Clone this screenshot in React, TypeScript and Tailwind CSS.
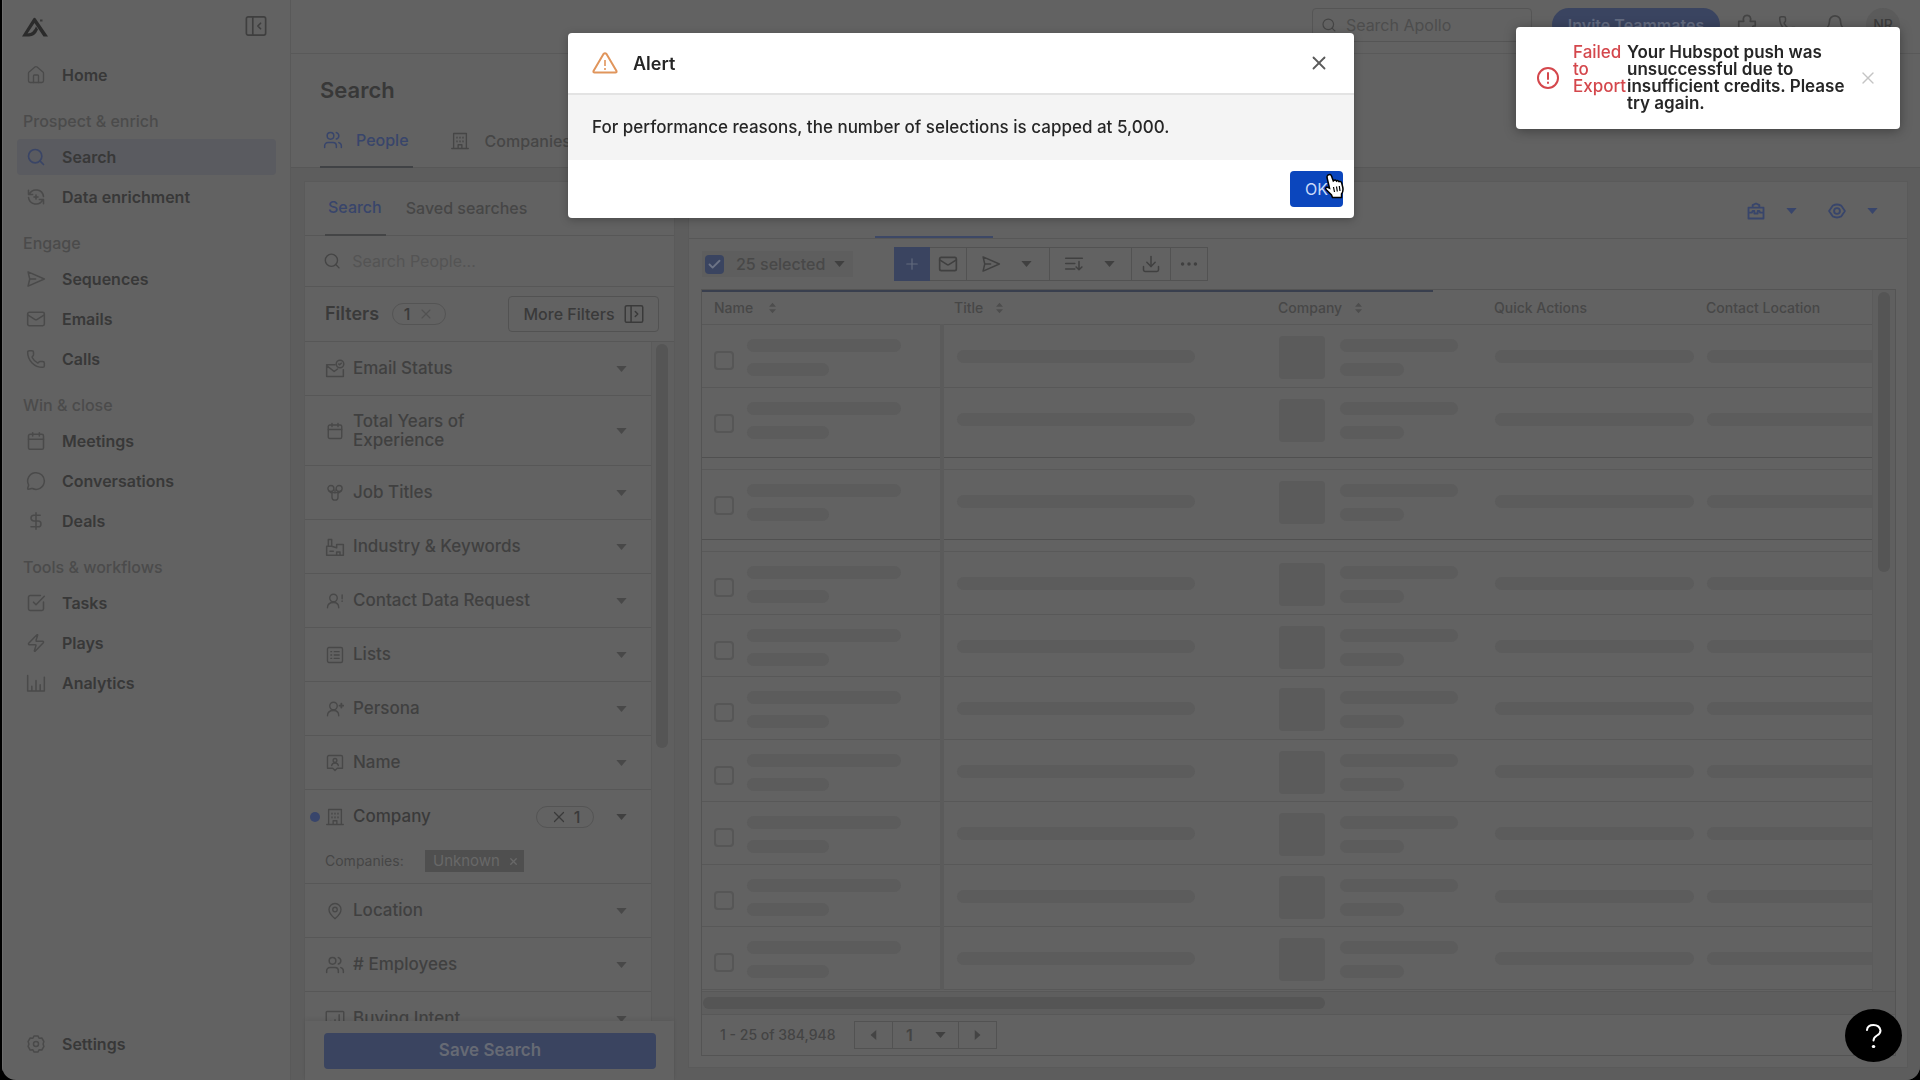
import type { ReactNode } from "react";
import clsx from "clsx";
import {
  Bell,
  Calendar,
  Check,
  DollarSign,
  Download,
  Ellipsis,
  House,
  Mail,
  MapPin,
  MessageCircle,
  Phone,
  Plus,
  Search,
  SquareCheckBig,
  Users,
  X,
  Zap,
} from "lucide-react";

/* ---------- icons ---------- */

const Svg = ({ children, className = "size-5" }: { children: ReactNode; className?: string }) => (
  <svg
    viewBox="0 0 24 24"
    fill="none"
    stroke="currentColor"
    strokeWidth="1.8"
    strokeLinecap="round"
    strokeLinejoin="round"
    className={clsx("shrink-0", className)}
    aria-hidden="true"
  >
    {children}
  </svg>
);

const Caret = ({ className = "text-[#404040]" }: { className?: string }) => (
  <svg viewBox="0 0 12 7" className={clsx("h-[6px] w-[11px] shrink-0", className)} aria-hidden="true">
    <path d="M0 0h12L6 7z" fill="currentColor" />
  </svg>
);

const SortIcon = () => (
  <svg viewBox="0 0 10 14" className="h-3 w-[9px]" aria-hidden="true">
    <path d="M1 5.5 5 1l4 4.500zM1 8.500 5 13l4-4.500z" fill="#4d4d4d" />
  </svg>
);

const Logo = () => (
  <svg viewBox="0 0 26 20" className="h-5 w-[26px]" aria-hidden="true">
    <path
      d="M0 19.500 11 2q1.500-2.500 3 0l12 17.500h-4.500L12.500 6 5.500 16.500q6-.5 8.500-7l2 3q-3 7-9 7z"
      fill="#2b2b2b"
      fillRule="evenodd"
    />
    <path d="M18 3.500h2.500" stroke="#3a3a3a" strokeWidth="2" />
  </svg>
);

const EnrichIcon = () => (
  <Svg>
    <path d="M3 4v5h5M21 20v-5h-5M4 8.500a9 9 0 0 1 17 3M20 15.500a9 9 0 0 1-17-3M12 9.500v5M9.500 12h5" />
  </Svg>
);
const SendIcon = () => (
  <Svg>
    <path d="M2.500 3.500 22 12 2.500 20.500l2-8.500zM4.500 12h7" />
  </Svg>
);
const ChartIcon = () => (
  <Svg>
    <path d="M2 3v18.500h20V5M7 21v-5M12 21V9M17 21v-7" />
  </Svg>
);
const GearIcon = () => (
  <Svg>
    <path d="M9.500 2.500h5l1.200 2.600 3.300-.3 2.500 4.300L20.500 12l1 2.900-2.500 4.300-3.300-.3-1.200 2.600h-5l-1.200-2.600-3.300.3-2.500-4.300L3.500 12l-1-2.900L5 4.800l3.300.3z" />
    <circle cx="12" cy="12" r="3" />
  </Svg>
);
const PuzzleIcon = () => (
  <Svg className="size-[22px]">
    <path d="M3 8h5.500C7 4 9 1.500 12 1.500S17 4 15.500 8H21v5c-4-1-4 5 0 4.500V22H3z" />
  </Svg>
);
const BuildingIcon = () => (
  <Svg className="size-[18px]">
    <path d="M1 22h22M3.500 22V2h17v20M9.500 22v-5h5v5M8 7v1M12 7v1M16 7v1M8 12v1M12 12v1M16 12v1" />
  </Svg>
);
const PanelIcon = ({ flip, className = "size-5" }: { flip?: boolean; className?: string }) => (
  <Svg className={className}>
    <rect x="1.500" y="2" width="21" height="20" rx="2" />
    <path d="M8.500 2v20" />
    <path d={flip ? "m13.500 9 3 3-3 3" : "m17 9-3 3 3 3"} />
  </Svg>
);
const EmailStatusIcon = () => (
  <Svg className="size-5">
    <path d="M12 7H2v14h20v-8M2 8l9 7 4-3" />
    <circle cx="18" cy="6" r="4.500" />
    <path d="m16.500 6 1 1 2-2" />
  </Svg>
);
const JobIcon = () => (
  <Svg className="size-[18px]">
    <circle cx="6.500" cy="6" r="4" />
    <circle cx="17.500" cy="6" r="4" />
    <path d="M12 8v4M8 11.500h8v6a4 4 0 0 1-8 0zM4 9.500l4 3M20 9.500l-4 3" />
  </Svg>
);
const IndustryIcon = () => (
  <Svg className="size-5">
    <path d="M2 22V11h6l6 2V9h8v13zM4 11V3h4v8M6 17h4M14 22v-4h4v4" />
  </Svg>
);
const PersonIcon = ({ children }: { children: ReactNode }) => (
  <Svg className="size-[18px]">
    <circle cx="10" cy="8" r="5" />
    <path d="M2 21c0-4 3-7 8-7s7 3 7 7" />
    {children}
  </Svg>
);
const ListIcon = () => (
  <Svg className="size-[18px]">
    <rect x="2" y="2" width="20" height="20" rx="2" />
    <path d="M6.500 7.500h1M11 7.500h6.500M6.500 12h1M11 12h6.500M6.500 16.500h1M11 16.500h6.500" />
  </Svg>
);
const NameIcon = () => (
  <Svg className="size-[18px]">
    <path d="M4 2h16a2 2 0 0 1 2 2v15H15l-3 3-3-3H2V4a2 2 0 0 1 2-2z" />
    <circle cx="12" cy="8.500" r="2.500" />
    <path d="M7.500 15.500c.5-2.500 2-3.500 4.500-3.500s4 1 4.500 3.500" />
  </Svg>
);
const IntentIcon = () => (
  <Svg className="size-5">
    <rect x="1.500" y="3" width="21" height="18" rx="1" />
    <path d="M7 17v-2M12 17v-4M17 17V7" />
  </Svg>
);
const QueueIcon = () => (
  <Svg>
    <path d="M2 5h20M2 11.500h11M2 18h11M18 9v10M14.500 15.500 18 19l3.500-3.500" />
  </Svg>
);
const ToolboxIcon = () => (
  <Svg>
    <path d="M3 8h18v13H3zM8 8V5l4-2 4 2v3M3 14h4l1-2h2v3h4v-3h2l1 2h4" strokeWidth="2.200" />
  </Svg>
);
const EyeIcon = () => (
  <Svg>
    <path d="M2.500 12 7 5.500Q12 3 17 5.500L21.500 12 17 18.500Q12 21 7 18.500z" strokeWidth="2.200" />
    <circle cx="12" cy="12" r="3.500" strokeWidth="2.200" />
  </Svg>
);
const HandCursor = () => (
  <svg viewBox="0 0 20 26" className="h-[26px] w-5" aria-hidden="true">
    <path
      d="M4 2q2.500-1.500 3.500 1l1.800 5 1-.8q1.700-.6 2.200.8 1.600-1 2.500.6 2-.8 2.700 1.400l1 4q1 4-1.200 7v3.500H8.500l-1-2.500-5-5q-1.800-2 .5-3l2.500 1.200L3 4.500Q2.800 3 4 2z"
      fill="#fff"
      stroke="#000"
      strokeWidth="1.500"
    />
    <path d="m9.500 14 1 5M12.500 13.500l.8 5M15.300 13l.7 5" stroke="#000" strokeWidth="1.200" />
  </svg>
);

/* ---------- data ---------- */

type NavItem = { label: string; icon: ReactNode; active?: boolean };

const navGroups: { title?: string; items: NavItem[] }[] = [
  { items: [{ label: "Home", icon: <House className="size-5" strokeWidth={1.6} /> }] },
  {
    title: "Prospect & enrich",
    items: [
      { label: "Search", icon: <Search className="size-5" strokeWidth={2} />, active: true },
      { label: "Data enrichment", icon: <EnrichIcon /> },
    ],
  },
  {
    title: "Engage",
    items: [
      { label: "Sequences", icon: <SendIcon /> },
      { label: "Emails", icon: <Mail className="size-5" strokeWidth={1.8} /> },
      { label: "Calls", icon: <Phone className="size-5" strokeWidth={1.8} /> },
    ],
  },
  {
    title: "Win & close",
    items: [
      { label: "Meetings", icon: <Calendar className="size-5" strokeWidth={1.8} /> },
      { label: "Conversations", icon: <MessageCircle className="size-5" strokeWidth={1.8} /> },
      { label: "Deals", icon: <DollarSign className="size-5" strokeWidth={1.8} /> },
    ],
  },
  {
    title: "Tools & workflows",
    items: [
      { label: "Tasks", icon: <SquareCheckBig className="size-5" strokeWidth={1.8} /> },
      { label: "Plays", icon: <Zap className="size-5" strokeWidth={1.8} /> },
      { label: "Analytics", icon: <ChartIcon /> },
    ],
  },
];

const filtersBefore = [
  { label: "Email Status", icon: <EmailStatusIcon /> },
  { label: "Total Years of Experience", icon: <Calendar className="size-[18px]" strokeWidth={1.8} />, tall: true },
  { label: "Job Titles", icon: <JobIcon /> },
  { label: "Industry & Keywords", icon: <IndustryIcon /> },
  { label: "Contact Data Request", icon: <PersonIcon><path d="M21.500 4v5M21.500 12v.5" /></PersonIcon> },
  { label: "Lists", icon: <ListIcon /> },
  { label: "Persona", icon: <PersonIcon><path d="M20.500 5v5M18 7.500h5" strokeWidth="2.500" /></PersonIcon> },
  { label: "Name", icon: <NameIcon /> },
];

const filtersAfter = [
  { label: "Location", icon: <MapPin className="size-[18px]" strokeWidth={1.8} /> },
  { label: "# Employees", icon: <Users className="size-5" strokeWidth={1.8} /> },
  { label: "Buying Intent", icon: <IntentIcon /> },
];

// height of each placeholder row; "gap" marks an empty band between rows
const rows = [
  { height: "h-[63px]" },
  { height: "h-[70px]" },
  { height: "h-3", gap: true },
  { height: "h-[70px]" },
  { height: "h-3", gap: true },
  { height: "h-[63px]" },
  { height: "h-[62px]" },
  { height: "h-[63px]" },
  { height: "h-[62px]" },
  { height: "h-[63px]" },
  { height: "h-[62px]" },
  { height: "h-[63px]" },
];

const columns = [
  { label: "Name", sort: true, gap: "gap-[15px]" },
  { label: "Title", sort: true, gap: "gap-3" },
  { label: "Company", sort: true, gap: "gap-3" },
  { label: "Quick Actions" },
  { label: "Contact Location" },
];

/* ---------- sections ---------- */

const NavLink = ({ label, icon, active }: NavItem) => (
  <a
    href="#"
    className={clsx(
      "flex h-9 items-center gap-4 rounded pl-[9px] text-base font-semibold text-[#383838]",
      active && "bg-[#5a5b60]",
    )}
  >
    <span className={active ? "text-[#3a4566]" : "text-[#4a4a4a]"}>{icon}</span>
    {label}
  </a>
);

const Sidebar = () => (
  <aside className="flex w-[289px] shrink-0 flex-col border-r border-[#595959] border-l border-l-[#6e6e6e] pr-[14px] pl-[14px]">
    <div className="mb-[13px] flex h-11 items-end justify-between pb-[7px] pr-[9px] pl-[5px] text-[#3f3f3f]">
      <Logo />
      <button aria-label="Collapse sidebar">
        <PanelIcon className="size-[22px]" />
      </button>
    </div>
    <nav className="flex-1">
      {navGroups.map((group, i) => (
        <div key={i}>
          {group.title && (
            <h2 className="mt-4 mb-1.5 h-6 pl-1.5 text-base leading-6 font-medium text-[#4b4b4b]">{group.title}</h2>
          )}
          <div className="flex flex-col gap-1">
            {group.items.map((item) => (
              <NavLink key={item.label} {...item} />
            ))}
          </div>
        </div>
      ))}
    </nav>
    <div className="pb-[18px]">
      <NavLink label="Settings" icon={<GearIcon />} />
    </div>
  </aside>
);

const TopBar = () => (
  <header className="flex h-[54px] shrink-0 items-center justify-end border-b border-[#595959] pr-[20px] pb-1 text-[#444444]">
    <label className="flex h-[34px] w-[220px] items-center gap-[9px] rounded border border-[#555555] pl-2">
      <Search className="size-[18px]" strokeWidth={1.8} />
      <input
        aria-label="Search Apollo"
        placeholder="Search Apollo"
        className="w-full min-w-0 bg-transparent text-base outline-none placeholder:text-[#4d4d4d]"
      />
    </label>
    <button className="ml-[20px] h-[34px] w-[168px] rounded-full bg-[#3a4460] text-base font-semibold text-[#636b80]">
      Invite Teammates
    </button>
    <button aria-label="Extensions" className="ml-[16px]"><PuzzleIcon /></button>
    <button aria-label="Dialer" className="ml-5"><Phone className="size-5" strokeWidth={1.8} /></button>
    <button aria-label="Notifications" className="ml-[26px]"><Bell className="size-[22px]" strokeWidth={1.8} /></button>
    <button className="ml-[20px] size-[34px] rounded-full bg-[#5b5b5b] text-sm font-medium text-[#3c3c3c]">NR</button>
  </header>
);

const PageHeader = () => (
  <div className="flex h-[114px] shrink-0 flex-col justify-between border-b border-[#575757] pl-[29px]">
    <h1 className="mt-5 text-[22px] leading-8 font-semibold text-[#383838]">Search</h1>
    <div className="-mb-px flex h-[55px] gap-[38px] text-base font-medium">
      <a href="#" className="flex items-center gap-[13px] border-b-2 border-[#404245] pr-1 pl-[3px] text-[#38456b]">
        <Users className="size-5" strokeWidth={1.8} />
        People
      </a>
      <a href="#" className="flex items-center gap-4 text-[#464646]">
        <BuildingIcon />
        Companies
      </a>
    </div>
  </div>
);

const FilterRow = ({ label, icon, tall }: { label: string; icon: ReactNode; tall?: boolean }) => (
  <button
    className={clsx(
      "flex w-full shrink-0 items-center border-b border-[#575757] pr-6 pl-5 text-left text-[17px] leading-[19px] font-medium text-[#404040]",
      tall ? "h-[70px]" : "h-[54px]",
    )}
  >
    <span className="mr-2 flex w-5 justify-center text-[#484848]">{icon}</span>
    <span className="w-[184px]">{label}</span>
    <span className="ml-auto"><Caret className="text-[#484848]" /></span>
  </button>
);

const CompanyFilter = () => (
  <div className="relative h-[94px] shrink-0 border-b border-[#575757] pr-6 pl-5">
    <span className="absolute top-[22px] left-[5px] size-[10px] rounded-full bg-[#38456b]" />
    <div className="flex h-[54px] items-center text-[17px] font-medium text-[#3a3a3a]">
      <span className="mr-2 flex w-5 justify-center text-[#474747]">
        <BuildingIcon />
      </span>
      Company
      <button className="mr-[22px] ml-auto flex h-[22px] w-[58px] items-center justify-center gap-1.5 rounded-full border border-[#545454] text-base">
        <X className="size-[18px]" strokeWidth={1.6} />1
      </button>
      <Caret className="text-[#404040]" />
    </div>
    <div className="flex h-[34px] items-center text-sm text-[#464646]">
      <span className="w-[100px]">Companies:</span>
      <button className="flex h-[22px] w-[99px] items-center gap-2 bg-[#4f4f4f] px-2 text-[15px] text-[#686868]">
        Unknown
        <X className="size-[11px] shrink-0" strokeWidth={3} />
      </button>
    </div>
  </div>
);

const FilterPanel = () => (
  <section className="flex w-[371px] shrink-0 flex-col border-x border-t border-[#5a5a5a] bg-[#626262]">
    <div className="flex h-[54px] shrink-0 gap-[20px] border-b border-[#575757] pl-5 text-base font-medium">
      <a href="#" className="-mb-px flex items-center border-b-2 border-[#444546] pr-1 pb-0.5 pl-[3px] text-[#38456b]">Search</a>
      <a href="#" className="flex items-center pb-0.5 text-[#464646]">Saved searches</a>
    </div>
    <label className="flex h-[51px] shrink-0 items-center gap-[11px] border-b border-[#575757] pl-[18px] text-[#454545]">
      <Search className="size-5" strokeWidth={1.8} />
      <input
        aria-label="Search people"
        placeholder="Search People..."
        className="w-full bg-transparent text-base outline-none placeholder:text-[#545454]"
      />
    </label>
    <div className="flex h-[55px] shrink-0 items-center border-b border-[#575757] pr-[15px] pl-[20px] text-[#3a3a3a]">
      <h2 className="text-lg font-semibold">Filters</h2>
      <button className="ml-[13px] flex h-[22px] w-[54px] items-center justify-center gap-2 rounded-full border border-[#545454] text-base font-medium">
        1<X className="size-4 text-[#525252]" strokeWidth={1.6} />
      </button>
      <button className="ml-auto flex h-9 w-[151px] items-center justify-center gap-[9px] rounded border border-[#525252] text-base font-medium">
        More Filters
        <PanelIcon flip />
      </button>
    </div>
    <div className="flex min-h-0 flex-1 overflow-hidden">
      <div className="flex min-w-0 flex-1 flex-col overflow-hidden border-r border-[#5a5a5a]">
        {filtersBefore.map((f) => (
          <FilterRow key={f.label} {...f} />
        ))}
        <CompanyFilter />
        {filtersAfter.map((f) => (
          <FilterRow key={f.label} {...f} />
        ))}
      </div>
      <div className="w-[22px] bg-[#5f5f5f] pt-0.5 pl-1">
        <div className="h-[404px] w-3 rounded-full bg-[#555555]" />
      </div>
    </div>
    <div className="shrink-0 pt-3 pr-[18px] pb-[11px] pl-[19px] shadow-[0_-2px_4px_rgba(0,0,0,0.06)]">
      <button className="h-9 w-full rounded bg-[#3a4460] text-[17px] font-semibold text-[#666a74]">Save Search</button>
    </div>
  </section>
);

const Tool = ({ label, className, children }: { label: string; className: string; children: ReactNode }) => (
  <button
    aria-label={label}
    className={clsx("flex h-[34px] items-center justify-center border-y border-r border-[#525252]", className)}
  >
    {children}
  </button>
);

const Toolbar = () => (
  <div className="flex h-[50px] shrink-0 items-center px-[13px] text-[#404040]">
    <div className="flex h-[26px] w-[151px] items-center bg-[#5e5e5e] pl-[3px]">
      <label className="relative mr-3 flex">
        <input type="checkbox" defaultChecked aria-label="Select all" className="size-[19px] appearance-none rounded-sm bg-[#3a4460]" />
        <Check className="pointer-events-none absolute top-0.5 left-0.5 size-[15px] text-[#6d7486]" strokeWidth={3} />
      </label>
      <button className="flex items-center gap-[9px] text-base font-medium text-[#484848]">
        25 selected
        <Caret />
      </button>
    </div>
    <div className="ml-[41px] flex">
      <button aria-label="Add" className="flex h-[34px] w-9 items-center justify-center bg-[#3a4460] text-[#626a7d]">
        <Plus className="size-[18px]" strokeWidth={1.6} />
      </button>
      <Tool label="Email" className="w-[37px]"><Mail className="size-5" strokeWidth={2} /></Tool>
      <Tool label="Sequence" className="w-[83px] gap-5 pr-[3px]"><SendIcon /><Caret /></Tool>
      <Tool label="Lists" className="w-[82px] gap-5 pr-[3px]"><QueueIcon /><Caret /></Tool>
      <Tool label="Export" className="w-[39px]"><Download className="size-5" strokeWidth={1.8} /></Tool>
      <Tool label="More" className="w-[37px]"><Ellipsis className="size-[22px]" strokeWidth={1.8} /></Tool>
    </div>
  </div>
);

const Bar = ({ className }: { className: string }) => <div className={clsx("h-[13px] rounded-full bg-[#5c5c5c]", className)} />;

const SkeletonRow = ({ height, index }: { height: string; index: number }) => (
  <tr className={clsx("border-b align-top", height === "h-[70px]" ? "border-[#505050]" : "border-[#585858]", height)}>
    <td className="border-r-4 border-[#5b5b5b] pt-[14px] pl-3">
      <div className="flex">
        <input
          type="checkbox"
          aria-label={`Select row ${index + 1}`}
          className="mt-3 mr-[13px] h-[19px] w-5 appearance-none rounded-sm border-2 border-[#565656]"
        />
        <div>
          <Bar className="w-[154px]" />
          <Bar className="mt-[11px] w-[82px]" />
        </div>
      </div>
    </td>
    <td className="pt-[25px] pl-[13px]"><Bar className="w-[238px]" /></td>
    <td className="pt-[11px] pl-[13px]">
      <div className="flex gap-[15px]">
        <div className="h-[43px] w-[46px] rounded bg-[#5b5b5b]" />
        <div className="pt-[3px]">
          <Bar className="w-[118px]" />
          <Bar className="mt-[11px] w-16" />
        </div>
      </div>
    </td>
    <td className="pt-[25px] pl-[13px]"><Bar className="w-[199px]" /></td>
    <td className="pt-[25px] pl-[13px]"><Bar className="w-full rounded-r-none" /></td>
  </tr>
);

const ResultsTable = () => (
  <div className="mr-[11px] mb-[11px] ml-3 flex min-h-0 flex-1 flex-col border border-[#545454]">
    <div className="flex min-h-0 flex-1">
      <div className="min-w-0 flex-1 overflow-hidden">
        <div className="h-0.5">
          <div className="h-0.5 w-[731px] bg-[#393f4e]" />
        </div>
        <table className="w-full table-fixed border-collapse">
          <colgroup>
            <col className="w-[240px]" />
            <col className="w-[324px]" />
            <col className="w-[216px]" />
            <col className="w-[212px]" />
            <col />
          </colgroup>
          <thead>
            <tr className="h-8 border-b border-[#585858]">
              {columns.map((c) => (
                <th key={c.label} scope="col" className="pl-3 text-left text-sm font-medium text-[#474747]">
                  <span className={clsx("flex items-center", c.gap)}>
                    {c.label}
                    {c.sort && <SortIcon />}
                  </span>
                </th>
              ))}
            </tr>
          </thead>
          <tbody>
            {rows.map((r, i) =>
              r.gap ? (
                <tr key={i} className={clsx("border-b border-[#595959]", r.height)}>
                  <td className="border-r-4 border-[#5b5b5b]" />
                  <td colSpan={4} />
                </tr>
              ) : (
                <SkeletonRow key={i} height={r.height} index={i} />
              ),
            )}
          </tbody>
        </table>
      </div>
      <div className="w-[23px] border-l border-[#5b5b5b] bg-[#5f5f5f] pt-0.5 pl-[5px]">
        <div className="h-[280px] w-3 rounded-full bg-[#555555]" />
      </div>
    </div>
    <div className="flex h-6 shrink-0 items-center border-y border-[#585858] bg-[#5e5e5e] pr-[24px] pl-px">
      <div className="h-3 w-[622px] rounded-full bg-[#555555]" />
    </div>
    <div className="flex h-10 shrink-0 items-center pl-[18px] text-sm text-[#444444]">
      <span className="w-[118px] font-medium">1 - 25 of 384,948</span>
      <div className="ml-4 flex h-[28px] border border-[#525252]">
        <button aria-label="Previous page" className="flex w-[38px] items-center justify-center border-r border-[#525252]">
          <Caret className="rotate-90" />
        </button>
        <div className="relative flex w-[66px] items-center border-r border-[#525252]">
          <select aria-label="Page" className="w-full appearance-none bg-transparent pl-[13px] text-base font-semibold outline-none">
            <option>1</option>
          </select>
          <span className="pointer-events-none absolute top-[10px] right-[12px] flex"><Caret /></span>
        </div>
        <button aria-label="Next page" className="flex w-[37px] items-center justify-center">
          <Caret className="-rotate-90" />
        </button>
      </div>
    </div>
  </div>
);

const ResultsPanel = () => (
  <section className="flex min-w-0 flex-1 flex-col border border-[#5a5a5a] bg-[#626262]">
    <div className="flex h-[57px] shrink-0 items-end justify-between border-b border-[#575757]">
      <div className="ml-[186px] h-0.5 w-[118px] bg-[#3d4866]" />
      <div className="flex items-center self-center pt-0.5 pr-[29px] text-[#38456b]">
        <button aria-label="Tools" className="flex items-center gap-[20px]">
          <ToolboxIcon />
          <Caret className="text-[#38456b]" />
        </button>
        <button aria-label="View options" className="ml-[30px] flex items-center gap-[20px]">
          <EyeIcon />
          <Caret className="text-[#38456b]" />
        </button>
      </div>
    </div>
    <Toolbar />
    <ResultsTable />
  </section>
);

const AlertDialog = () => (
  <div className="pointer-events-none fixed inset-0 z-10 flex items-start justify-center pt-[33px] pl-[2px]">
    <div
      role="alertdialog"
      aria-labelledby="alert-title"
      className="pointer-events-auto w-[786px] overflow-hidden rounded bg-white text-[#262626] shadow-[0_2px_8px_rgba(0,0,0,0.25)]"
    >
      <div className="flex h-[62px] items-center border-b-2 border-[#e3e3e3] px-[24px]">
        <svg
          viewBox="0 0 26 22"
          className="h-[22px] w-[26px]"
          fill="none"
          stroke="#e0955c"
          strokeWidth="2"
          strokeLinejoin="round"
          aria-hidden="true"
        >
          <path d="M11.500 2q1.500-1.500 3 0L24.500 19q.3 1.500-1 1.500h-21q-1.300 0-1-1.500z" />
          <path d="M13 8v6M13 16v2" strokeWidth="1.600" />
        </svg>
        <h2 id="alert-title" className="ml-[15px] pt-0.5 text-lg font-semibold">Alert</h2>
        <button aria-label="Close" className="ml-auto text-[#5a5a5a]">
          <X className="size-[22px]" strokeWidth={2} />
        </button>
      </div>
      <p className="bg-[#f4f4f4] px-[24px] py-5 text-[17px] leading-[25px] font-medium">
        For performance reasons, the number of selections is capped at 5,000.
      </p>
      <div className="flex justify-end pt-[11px] pr-[11px] pb-[11px]">
        <button className="relative h-9 w-[53px] rounded bg-[#0b46bd] pl-[15px] text-left text-base text-[#c9daf8]">
          OK
          <span className="absolute top-0.5 left-[34px]">
            <HandCursor />
          </span>
        </button>
      </div>
    </div>
  </div>
);

const Toast = () => (
  <div
    role="alert"
    className="fixed top-[27px] right-[20px] z-20 flex h-[102px] w-[384px] items-center rounded bg-white pl-[20px] text-[17px] leading-[17px] font-semibold text-[#262626] shadow-[0_2px_12px_rgba(0,0,0,0.35)]"
  >
    <Svg className="size-[24px] text-[#d4474c]">
      <circle cx="12" cy="12" r="10" strokeWidth="2" />
      <path d="M12 7v6M12 16.500v.5" strokeWidth="2" />
    </Svg>
    <div className="ml-[13px] flex items-start">
      <span className="w-[54px] shrink-0 font-medium text-[#d4474c]">Failed to Export</span>
      <span className="w-[222px]">Your Hubspot push was unsuccessful due to insufficient credits. Please try again.</span>
    </div>
    <button aria-label="Dismiss" className="ml-[9px] text-[#c4c4c4]">
      <X className="size-5" strokeWidth={1.6} />
    </button>
  </div>
);

const HelpButton = () => (
  <button
    aria-label="Help"
    className="fixed right-[18px] bottom-[18px] z-10 flex h-[53px] w-[57px] items-center justify-center rounded-[50%] bg-black"
  >
    <svg viewBox="0 0 18 26" className="h-[26px] w-[18px]" fill="none" stroke="#fff" strokeWidth="2" strokeLinecap="round" aria-hidden="true">
      <path d="M2 7Q2.500 2 8.500 2t7 5.500q0 3-3.500 5t-3.500 5" />
      <path d="M8.400 23.500h.3" strokeWidth="3.200" />
    </svg>
  </button>
);

export default function App() {
  return (
    <div className="h-screen bg-black pl-[2px] font-['Inter',sans-serif]">
      <div className="flex h-full overflow-hidden rounded-b-[14px] bg-[#626262]">
        <Sidebar />
        <main className="flex min-w-0 flex-1 flex-col">
          <TopBar />
          <PageHeader />
          <div className="flex min-h-0 flex-1 gap-[13px] bg-[#5d5d5d] pt-[13px] pr-3 pl-[13px]">
            <FilterPanel />
            <div className="flex min-w-0 flex-1 pb-[12px]">
              <ResultsPanel />
            </div>
          </div>
        </main>
      </div>
      <AlertDialog />
      <Toast />
      <HelpButton />
    </div>
  );
}
